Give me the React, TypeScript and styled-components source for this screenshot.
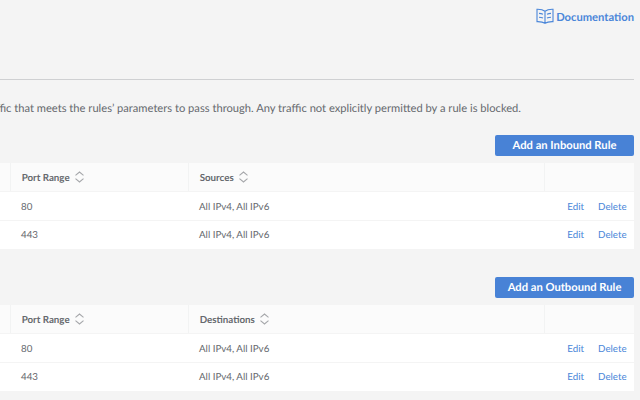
import React from "react";
import styled, { createGlobalStyle } from "styled-components";

const GlobalStyle = createGlobalStyle`
  * { box-sizing: border-box; }
  body { margin: 0; background: #f4f4f4; overflow: hidden; }
`;

const Page = styled.main`
  width: 640px;
  height: 400px;
  overflow: hidden;
  padding-right: 6px;
  background: #f4f4f4;
  color: #66696e;
  font-family: Lato, sans-serif;
  font-size: 9.75px;
  text-rendering: geometricPrecision;
`;

const TopBar = styled.header`
  height: 80px;
  border-bottom: 1px solid #cfd0d2;
  display: flex;
  justify-content: flex-end;
  align-items: flex-start;
  padding-top: 8px;
`;

const DocLink = styled.a`
  display: flex;
  align-items: center;
  gap: 2px;
  height: 17px;
  color: #4a86d9;
  font-size: 11.2px;
  line-height: 15px;
  font-weight: 700;
  white-space: nowrap;
`;

const DocLabel = styled.span`
  padding-top: 1px;
`;

const Intro = styled.p`
  margin: 0;
  height: 55px;
  padding: 21px 113px 0 0;
  display: flex;
  justify-content: flex-end;
  font-size: 11.16px;
  line-height: 15px;
  white-space: nowrap;
`;

const Section = styled.section`
  height: 142px;
`;

const Actions = styled.div`
  display: flex;
  justify-content: flex-end;
  height: 28px;
`;

const AddButton = styled.button`
  width: 139px;
  height: 21px;
  padding: 0;
  border: 0;
  border-radius: 2px;
  background: #4882d6;
  color: #fff;
  font: 700 11.2px/21px Lato, sans-serif;
  text-rendering: geometricPrecision;
  white-space: nowrap;
`;

const Row = styled.div<{ $head?: boolean }>`
  display: grid;
  grid-template-columns: 10px 178px 356px 90px;
  height: 29px;
  line-height: 14px;
  background: ${(p) => (p.$head ? "#fbfbfb" : "#fff")};
  border-bottom: 1px solid #f4f4f4;
  &:last-child { height: 28px; border-bottom: 0; }
`;

const HeadCell = styled.div`
  display: flex;
  align-items: center;
  gap: 5.5px;
  padding-left: 10.7px;
  border-left: 1px solid #f2f3f3;
  font-weight: 700;
  white-space: nowrap;
`;

const HeadLabel = styled.span`
  padding-top: 2px;
`;

const Cell = styled.div`
  display: flex;
  align-items: center;
  padding: 2px 0 0 11px;
  white-space: nowrap;
  ${Row}:last-child & { padding-top: 0; }
`;

const RowActions = styled(Cell)`
  justify-content: flex-end;
  gap: 14px;
  padding-left: 0;
  padding-right: 7.4px;
  color: #4a86d9;
`;

const BookIcon = () => (
  <svg width="18" height="17" viewBox="0 0 18 17" fill="none" stroke="#4a86d9" strokeWidth="1.1">
    <path d="M9 3.2C7 1.7 4.2 1.2 1 1.3v12.3c3.2-.1 6 .3 8 1.7 2-1.4 4.8-1.8 8-1.7V1.3C13.8 1.2 11 1.7 9 3.2Zm0 0v12.1" />
    <path d="M3 5.4c1.5 0 2.8.3 4 .9M3 9.2c1.5 0 2.8.3 4 .9M15 5.4c-1.5 0-2.8.3-4 .9M15 9.2c-1.5 0-2.8.3-4 .9" />
  </svg>
);

const SortIcon = () => (
  <svg width="9" height="12" viewBox="0 0 9 12" fill="none" stroke="#a5a7aa" strokeWidth="1.1">
    <path d="M.5 4.3 4.5 1l4 3.300M.5 7.700l4 3.300 4-3.300" />
  </svg>
);

function RuleTable({ action, target }: { action: string; target: string }) {
  return (
    <Section>
      <Actions>
        <AddButton>{action}</AddButton>
      </Actions>
      <div>
        <Row $head>
          <div />
          <HeadCell><HeadLabel>Port Range</HeadLabel><SortIcon /></HeadCell>
          <HeadCell><HeadLabel>{target}</HeadLabel><SortIcon /></HeadCell>
          <HeadCell />
        </Row>
        {["80", "443"].map((port) => (
          <Row key={port}>
            <div />
            <Cell>{port}</Cell>
            <Cell>All IPv4, All IPv6</Cell>
            <RowActions>
              <a>Edit</a>
              <a>Delete</a>
            </RowActions>
          </Row>
        ))}
      </div>
    </Section>
  );
}

export default function App() {
  return (
    <>
      <GlobalStyle />
      <Page>
        <TopBar>
          <DocLink><BookIcon /><DocLabel>Documentation</DocLabel></DocLink>
        </TopBar>
        <Intro>ffic that meets the rules’ parameters to pass through. Any traffic not explicitly permitted by a rule is blocked.</Intro>
        <RuleTable action="Add an Inbound Rule" target="Sources" />
        <RuleTable action="Add an Outbound Rule" target="Destinations" />
      </Page>
    </>
  );
}
